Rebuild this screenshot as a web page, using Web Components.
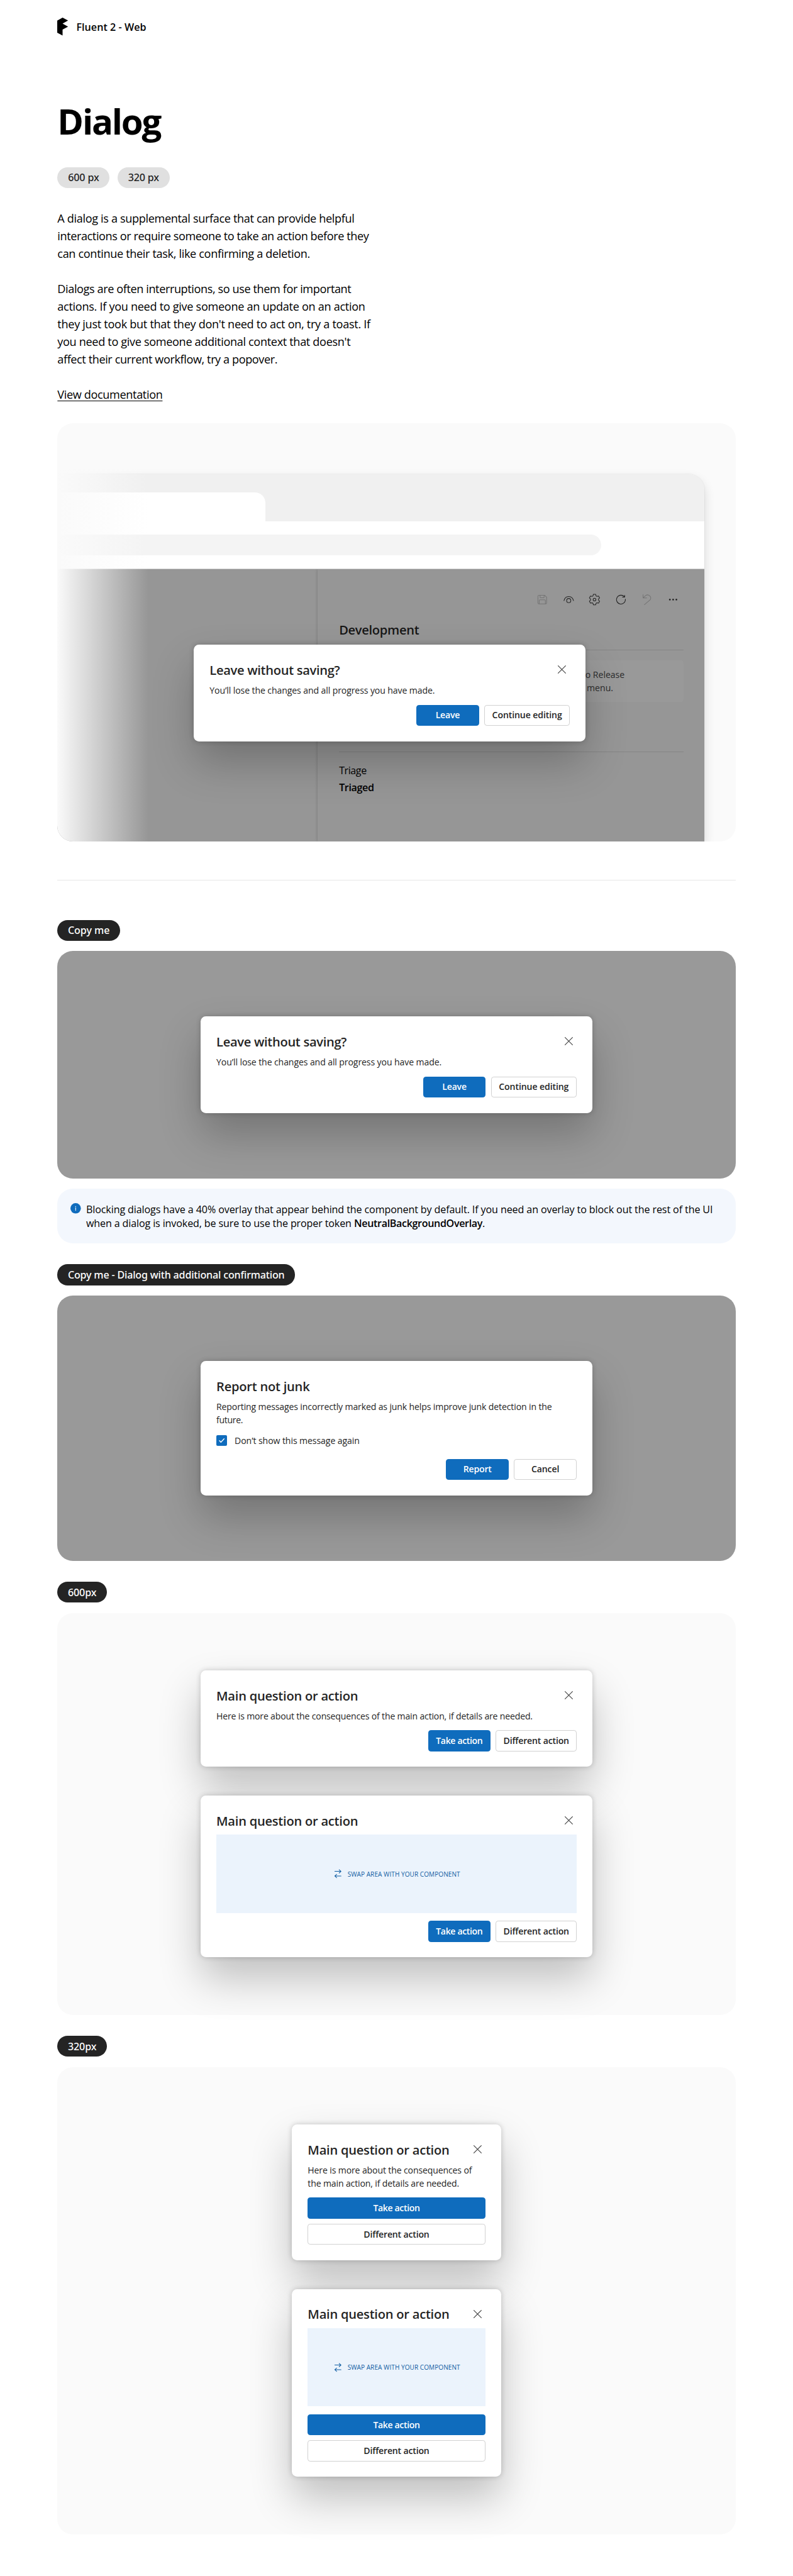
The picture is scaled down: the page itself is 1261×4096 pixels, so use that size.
<!DOCTYPE html>
<html lang="en"><head><meta charset="utf-8"><title>Fluent 2 - Web: Dialog</title>
<style>
html{font-size:10.3786px;background:#fff}
body{margin:0;font-family:"Open Sans","Noto Sans",sans-serif;color:#000}
</style></head><body>
<dialog-page></dialog-page>
<script>
const define=(name,html,setup)=>{
  const t=document.createElement('template');t.innerHTML=html;
  customElements.define(name,class extends HTMLElement{
    constructor(){super();this.attachShadow({mode:'open'}).append(t.content.cloneNode(true))}
    connectedCallback(){if(setup&&!this.ready){this.ready=true;setup(this,this.shadowRoot)}}
  });
};

/* One line of type: s = size, l = line height, t = tracking in em, weight = font weight */
define('ui-text',`<style>
:host{display:block;white-space:nowrap;font-size:calc(var(--s)*.097rem);line-height:calc(var(--l)*.1rem);letter-spacing:calc(var(--t)*var(--s)*.1rem);
padding-top:calc(var(--s)*.004rem);margin-bottom:calc(var(--s)*-.004rem)}
:host([weight="600"]){font-weight:600}:host([weight="700"]){font-weight:700}
:host([weight="500"]){font-weight:500;font-family:"Noto Sans","Open Sans",sans-serif}
</style><slot></slot>`,e=>{for(const k of ['s','l','t'])e.style.setProperty('--'+k,e.getAttribute(k)||0)});

define('fluent-logo',`<style>:host{display:block;width:1.65rem;height:2.75rem}svg{display:block;width:100%;height:100%}</style>
<svg viewBox="0 0 16.5 27.5"><path d="M8.2 0l8.3 4.5-8.3 4.6 8.3 4.7-8.3 4.6v9.1L0 23.1V4.5z"/></svg>`);

define('page-header',`<style>:host{display:flex;align-items:center;gap:1.25rem;height:8.17rem}</style>
<fluent-logo></fluent-logo><slot></slot>`);

define('size-chip',`<style>:host{display:flex;align-items:center;justify-content:center;box-sizing:border-box;height:3.2rem;width:8rem;border-radius:1.6rem;background:#e0e0e0;color:#242424}</style><slot></slot>`);

define('section-pill',`<style>:host{display:flex;align-items:center;box-sizing:border-box;height:3.2rem;padding-left:1.6rem;border-radius:1.6rem;background:#242424;color:#fff;align-self:flex-start}</style><slot></slot>`,
 e=>{e.style.width=e.getAttribute('width')/10+'rem'});

define('ui-button',`<style>:host{display:flex;align-items:center;justify-content:center;box-sizing:border-box;height:3.2rem;border-radius:.4rem;border:1px solid #d1d1d1;background:#fff;color:#242424}
:host([primary]){background:#0f6cbd;border-color:#0f6cbd;color:#fff}</style><slot></slot>`,
 e=>{if(e.hasAttribute('width'))e.style.width=e.getAttribute('width')/10+'rem'});

define('close-icon',`<style>:host{display:block;width:2.4rem;height:2.4rem}svg{display:block;width:100%;height:100%}</style>
<svg viewBox="0 0 24 24" fill="none" stroke="#424242" stroke-width="1.1" stroke-linecap="round"><path d="M6.3 6.3l11.4 11.4M17.7 6.3L6.3 17.7"/></svg>`);

define('swap-area',`<style>:host{display:flex;align-items:center;justify-content:center;gap:.65rem;height:12rem;background:#ebf3fc;color:#115ea3}svg{display:block;width:1.6rem;height:1.6rem}</style>
<svg viewBox="0 0 16 16" fill="none" stroke="#115ea3" stroke-width="1" stroke-linecap="round" stroke-linejoin="round"><path d="M3.3 4.4H12.8M9.9 1.9l2.9 2.5-2.9 2.6M12.8 11.5H3.3M6.1 9L3.3 11.5l2.8 2.6"/></svg>
<ui-text s="10" l="14" t=".0054">SWAP AREA WITH YOUR COMPONENT</ui-text>`);

define('check-row',`<style>:host{display:flex;align-items:center;gap:1.2rem;height:4.4rem}.b{width:1.6rem;height:1.6rem;border-radius:.2rem;background:#0f6cbd}svg{display:block;width:100%;height:100%}</style>
<div class="b"><svg viewBox="0 0 16 16" fill="none" stroke="#fff" stroke-width="1.3" stroke-linecap="round" stroke-linejoin="round"><path d="M4.8 8.4l2.2 2.4 4.9-5.3"/></svg></div><slot></slot>`);

define('dialog-box',`<style>
:host{display:flex;flex-direction:column;box-sizing:border-box;width:60rem;padding:2.4rem;border-radius:.8rem;background:#fff;color:#242424;box-shadow:0 0 .8rem rgba(0,0,0,.2),0 3.2rem 6.4rem rgba(0,0,0,.24)}
:host([narrow]){width:32rem}
.h{display:flex;justify-content:space-between;align-items:center;height:2.8rem;margin-bottom:.8rem}
:host([no-close]) close-icon{display:none}
.a{display:flex;gap:.8rem;justify-content:flex-end;margin-top:1.2rem}
:host([narrow]) .a{flex-direction:column}
:host([tight]) .a{margin-top:.6rem}
</style><div class="h"><slot name="title"></slot><close-icon></close-icon></div><div><slot></slot></div><div class="a"><slot name="action"></slot></div>`);

define('demo-panel',`<style>:host{display:flex;flex-direction:column;align-items:center;gap:4.4rem;padding:8.8rem 0;border-radius:2.4rem;background:#fafafa;margin-top:1.6rem}
:host([overlay]){background:#999;padding:10rem 0}</style><slot></slot>`);

define('info-note',`<style>:host{display:flex;gap:.8rem;height:8.4rem;box-sizing:border-box;padding:2rem;margin-top:1.6rem;border-radius:2.4rem;background:#f3f7fd}
svg{display:block;width:1.6rem;height:1.6rem;margin-top:.2rem}.l{display:flex}</style>
<svg viewBox="0 0 16 16"><circle cx="8" cy="8" r="8" fill="#0f6cbd"/><circle cx="8" cy="5.2" r=".7" fill="#fff"/><path d="M8 7.1v4.2" stroke="#fff" stroke-width="1" stroke-linecap="round"/></svg>
<div><ui-text s="16" l="22" t="-.007">Blocking dialogs have a 40% overlay that appear behind the component by default. If you need an overlay to block out the rest of the UI</ui-text>
<div class="l"><ui-text s="16" l="22" t="-.008">when a dialog is invoked, be sure to use the proper token</ui-text><ui-text s="16" l="22" weight="600" t="-.0214" style="margin-left:.41rem">NeutralBackgroundOverlay</ui-text><ui-text s="16" l="22">.</ui-text></div></div>`);

define('tool-bar',`<style>:host{display:flex;justify-content:flex-end;gap:2rem;padding:3.7rem .6rem 0 0}
svg{display:block;width:2rem;height:2rem;fill:none;stroke:#242424;stroke-width:1;stroke-linecap:round;stroke-linejoin:round}.off{stroke:#757575}</style>
<svg class="off" viewBox="0 0 20 20"><path d="M4.9 3.4H13.6L16.6 6.3V15A1.6 1.6 0 0 1 15 16.6H4.9A1.6 1.6 0 0 1 3.3 15V5A1.6 1.6 0 0 1 4.9 3.4zM6.6 3.4V6.4A.9 .9 0 0 0 7.5 7.3H11.8A.9 .9 0 0 0 12.7 6.4V3.4M5.3 16.6V11.4A1 1 0 0 1 6.3 10.4H13.7A1 1 0 0 1 14.7 11.4V16.6"/></svg>
<svg viewBox="0 0 20 20"><path d="M2.7 11.6C3.7 7.6 6.6 5.3 10 5.3S16.3 7.6 17.3 11.6"/><circle cx="10" cy="11.5" r="3.2"/></svg>
<svg viewBox="-10 -10 20 20"><path d="M-1.7 -8.1H1.7L2.3 -5.9Q2.9 -5 3.96 -4.94L6.16 -5.52L7.86 -2.58L6.26 -.96Q5.78 0 6.26 .96L7.86 2.58L6.16 5.52L3.96 4.94Q2.9 5 2.3 5.9L1.7 8.1H-1.7L-2.3 5.9Q-2.9 5 -3.96 4.94L-6.16 5.52L-7.86 2.58L-6.26 .96Q-5.78 0 -6.26 -.96L-7.86 -2.58L-6.16 -5.52L-3.96 -4.94Q-2.9 -5 -2.3 -5.9z"/><circle r="2.1"/></svg>
<svg viewBox="0 0 20 20"><path d="M16.8 9.3A6.8 6.8 0 1 1 15.5 6M15.7 3.3V6.3H12.4"/></svg>
<svg class="off" viewBox="0 0 20 20"><path d="M4.4 2.4V7.4H10M4.6 7.2L8.5 3.7A4.9 4.9 0 0 1 15.4 10.3L6.6 17.7"/></svg>
<svg viewBox="0 0 20 20" style="fill:#242424;stroke:none"><circle cx="5" cy="10" r="1.3"/><circle cx="10" cy="10" r="1.3"/><circle cx="15" cy="10" r="1.3"/></svg>`);

define('dev-pane',`<style>:host{display:block;flex:1;padding:0 3.25rem;background:#969696;box-shadow:0 0 .4rem rgba(0,0,0,.22)}
.r{height:1px;background:#858585}.box{margin:1.6rem 0 7.6rem;box-sizing:border-box;height:6.37rem;border-radius:.4rem;background:#999;padding:1.2rem 0 0 37.25rem;color:#2b2b2b}
</style><tool-bar></tool-bar>
<ui-text s="20" l="28" weight="600" t="-.0154" style="margin-top:2.17rem;color:#161616">Development</ui-text>
<div class="r" style="margin-top:1.65rem"></div>
<div class="box"><ui-text s="14" l="20" t="-.0012">to Release</ui-text><ui-text s="14" l="20" t=".0017" style="margin-left:.7rem">menu.</ui-text></div>
<div class="r"></div>
<ui-text s="16" l="25.6" t="-.0265" style="margin-top:1.5rem">Triage</ui-text><ui-text s="16" l="25.6" weight="600" t="-.022">Triaged</ui-text>`);

define('browser-window',`<style>:host{display:flex;flex-direction:column;position:relative;width:99.15rem;height:56.25rem;border-radius:0 2.4rem 0 0;box-shadow:0 0 .2rem rgba(0,0,0,.12),0 .8rem 1.6rem rgba(0,0,0,.14)}
.tabs{display:flex;align-items:flex-end;height:7.26rem;background:#f0f0f0;border-radius:0 2.4rem 0 0}.tab{width:31.89rem;height:4.42rem;background:#fff;border-radius:0 1.6rem 0 0}
.bar{padding:2rem 0;background:#fff;border-bottom:1px solid #d4d4d4}.url{width:83.3rem;height:3.2rem;border-radius:1.6rem;background:#f4f4f4}
.body{display:flex;flex:1;background:#969696;overflow:hidden}.nav{width:39.9rem}
.fade{position:absolute;inset:-1rem auto 0 0;width:13.9rem;background:linear-gradient(90deg,#fafafa,rgba(250,250,250,0))}</style>
<div class="tabs"><div class="tab"></div></div><div class="bar"><div class="url"></div></div><div class="body"><div class="nav"></div><dev-pane></dev-pane></div><div class="fade"></div>`);

define('hero-card',`<style>:host{display:block;position:relative;overflow:hidden;box-sizing:border-box;height:64rem;margin-top:3.2rem;padding-top:7.75rem;border-radius:2.4rem;background:#fafafa}
.over{position:absolute;left:20.92rem;top:33.9rem}</style><browser-window></browser-window><div class="over"><slot></slot></div>`);

const leave=`<dialog-box><ui-text slot="title" s="20" l="28" weight="600" t="-.0153">Leave without saving?</ui-text><ui-text s="14" l="20" t="-.0073">You’ll lose the changes and all progress you have made.</ui-text>
<ui-button slot="action" primary width="96"><ui-text s="14" l="20" weight="600" t="-.016">Leave</ui-text></ui-button><ui-button slot="action" width="131.3"><ui-text s="14" l="20" weight="600" t="-.0069">Continue editing</ui-text></ui-button></dialog-box>`;
const main=`<ui-text slot="title" s="20" l="28" weight="600" t="-.012">Main question or action</ui-text>`;
const acts=narrow=>`<ui-button slot="action" primary ${narrow?'':'width="96"'}><ui-text s="14" l="20" weight="600" t="-.0246">Take action</ui-text></ui-button><ui-button slot="action" ${narrow?'':'width="123.8"'}><ui-text s="14" l="20" weight="600" t="-.012">Different action</ui-text></ui-button>`;

define('dialog-page',`<style>
:host{display:flex;flex-direction:column;padding:0 8.8rem 6.4rem;background:#fff}
.chips{display:flex;gap:1.2rem;margin:3.42rem 0 3.2rem}
.link{align-self:flex-start;margin-top:2.7rem;height:2.7rem;display:flex;text-decoration:underline;text-decoration-thickness:.13rem;text-underline-offset:.25rem}
hr{width:100%;border:0;height:1px;background:#e6e6e6;margin:5.95rem 0 6rem}
.gap{margin-top:3.2rem}
</style>
<page-header><ui-text s="16" l="22" weight="600" t=".0029">Fluent 2 - Web</ui-text></page-header>
<ui-text s="56" l="76" weight="700" t="-.0371" style="margin-top:6.4rem">Dialog</ui-text>
<div class="chips"><size-chip><ui-text s="16" l="22" weight="500" t="-.0091">600 px</ui-text></size-chip><size-chip><ui-text s="16" l="22" weight="500" t="-.0091">320 px</ui-text></size-chip></div>
<ui-text s="18" l="27" t="-.0187">A dialog is a supplemental surface that can provide helpful</ui-text>
<ui-text s="18" l="27" t="-.0222">interactions or require someone to take an action before they</ui-text>
<ui-text s="18" l="27" t="-.0185">can continue their task, like confirming a deletion.</ui-text>
<ui-text s="18" l="27" t="-.0216" style="margin-top:2.7rem">Dialogs are often interruptions, so use them for important</ui-text>
<ui-text s="18" l="27" t="-.0163">actions. If you need to give someone an update on an action</ui-text>
<ui-text s="18" l="27" t="-.0161">they just took but that they don't need to act on, try a toast. If</ui-text>
<ui-text s="18" l="27" t="-.0181">you need to give someone additional context that doesn't</ui-text>
<ui-text s="18" l="27" t="-.022">affect their current workflow, try a popover.</ui-text>
<div class="link"><ui-text s="18" l="27" t="-.0194">View documentation</ui-text></div>
<hero-card>${leave}</hero-card>
<hr>
<section-pill width="96"><ui-text s="16" l="22" weight="500" t="-.0039">Copy me</ui-text></section-pill>
<demo-panel overlay>${leave}</demo-panel>
<info-note></info-note>
<section-pill class="gap" width="364.2"><ui-text s="16" l="22" weight="500" t="-.0114">Copy me - Dialog with additional confirmation</ui-text></section-pill>
<demo-panel overlay><dialog-box no-close tight><ui-text slot="title" s="20" l="28" weight="600" t="-.0119">Report not junk</ui-text>
<ui-text s="14" l="20" t="-.0098">Reporting messages incorrectly marked as junk helps improve junk detection in the</ui-text><ui-text s="14" l="20" t="-.0232">future.</ui-text>
<check-row><ui-text s="14" l="20" t="-.0058">Don’t show this message again</ui-text></check-row>
<ui-button slot="action" primary width="96"><ui-text s="14" l="20" weight="600" t="-.011">Report</ui-text></ui-button><ui-button slot="action" width="96"><ui-text s="14" l="20" weight="600" t="-.0109">Cancel</ui-text></ui-button></dialog-box></demo-panel>
<section-pill class="gap" width="75.8"><ui-text s="16" l="22" weight="500" t="-.0067">600px</ui-text></section-pill>
<demo-panel><dialog-box>${main}<ui-text s="14" l="20" t="-.0121">Here is more about the consequences of the main action, if details are needed.</ui-text>${acts(false)}</dialog-box>
<dialog-box>${main}<swap-area></swap-area>${acts(false)}</dialog-box></demo-panel>
<section-pill class="gap" width="75.8"><ui-text s="16" l="22" weight="500" t="-.0067">320px</ui-text></section-pill>
<demo-panel><dialog-box narrow>${main}<ui-text s="14" l="20" t="-.0094">Here is more about the consequences of</ui-text><ui-text s="14" l="20" t="-.0104">the main action, if details are needed.</ui-text>${acts(true)}</dialog-box>
<dialog-box narrow>${main}<swap-area></swap-area>${acts(true)}</dialog-box></demo-panel>`);
</script>
</body></html>
